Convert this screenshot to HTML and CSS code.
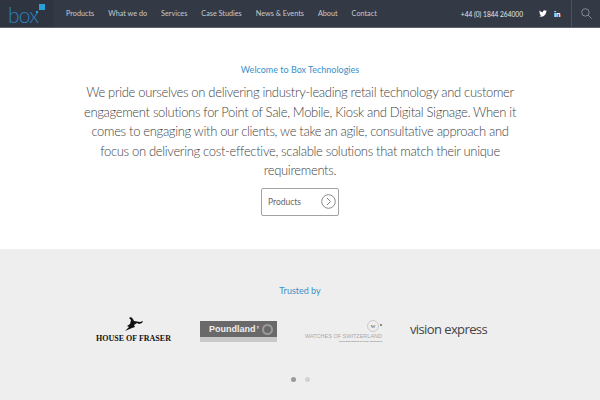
FILE: index.html
```html
<!DOCTYPE html>
<html lang="en">
<head>
<meta charset="utf-8">
<title>Box Technologies</title>
<link rel="stylesheet" href="styles.css">
</head>
<body>
<header class="topbar">
  <a class="logo">
    <span class="logo-word">box</span>
    <svg class="logo-mark" width="14" height="14" viewBox="0 0 14 14"><rect x="6" y="0" width="6" height="6" fill="#2a9fd8"/><rect x="3" y="7" width="2" height="2" fill="#2a9fd8"/></svg>
  </a>
  <nav class="nav">
    <a>Products</a><a>What we do</a><a>Services</a><a>Case Studies</a><a>News &amp; Events</a><a>About</a><a>Contact</a>
  </nav>
  <div class="phone">+44 (0) 1844 264000</div>
  <div class="social">
    <svg width="8" height="7" viewBox="0 0 24 20"><path fill="#fff" d="M24 2.4c-.9.4-1.8.7-2.8.8 1-.6 1.800-1.600 2.200-2.700-1 .6-2 1-3.100 1.200A4.900 4.900 0 0 0 11.900 6.200C7.800 6 4.200 4 1.700.9c-1.300 2.200-.7 5.100 1.500 6.600-.8 0-1.600-.2-2.200-.6 0 2.400 1.700 4.400 3.900 4.900-.7.200-1.500.2-2.200.1.600 2 2.400 3.400 4.600 3.400A9.900 9.900 0 0 1 0 17.300 14 14 0 0 0 21.500 4.900c1-.7 1.900-1.500 2.500-2.500z"/></svg>
    <span class="in">in</span>
  </div>
  <div class="search">
    <svg width="11" height="11" viewBox="0 0 13 13" fill="none" stroke="#8b919a" stroke-width="1.100"><circle cx="5.200" cy="5.200" r="4.400"/><path d="M8.400 8.400l4.200 4.200"/></svg>
  </div>
</header>
<main>
  <section class="intro">
    <h2 class="kicker">Welcome to Box Technologies</h2>
    <p class="lead">We pride ourselves on delivering industry-leading retail technology and customer engagement solutions for Point of Sale, Mobile, Kiosk and Digital Signage. When it comes to engaging with our clients, we take an agile, consultative approach and focus on delivering cost-effective, scalable solutions that match their unique requirements.</p>
    <a class="btn">
      <span>Products</span>
      <svg width="15" height="15" viewBox="0 0 15 15" fill="none" stroke="#8a8a8a" stroke-width="1"><circle cx="7.500" cy="7.500" r="6.800"/><path d="M6 4l3.500 3.500L6 11"/></svg>
    </a>
  </section>
  <section class="trusted">
    <h2 class="kicker">Trusted by</h2>
    <div class="logos">
      <div class="client hof">
        <svg width="21" height="15" viewBox="0 0 21 15"><path fill="#111" d="M8 0l2 2 1 2 6 1 3-1-1 2-3 1-2-1-3 2 1 2-3 1-7 3 4-4-2-1 3-2 1-4-2-2z"/></svg>
        <span>HOUSE OF FRASER</span>
      </div>
      <div class="client pound"><span class="pound-top">Poundland<i>’</i><b></b></span><span class="pound-foot"></span></div>
      <div class="client watches">
        <span class="w-mark">W<i></i></span>
        <span class="w-name">WATCHES OF SWITZERLAND</span>
        <span class="w-sub">specialist retailers of luxury timepieces</span>
      </div>
      <div class="client vision">vision express</div>
    </div>
    <div class="dots"><span class="dot on"></span><span class="dot"></span></div>
  </section>
</main>
</body>
</html>
```
FILE: styles.css
```css
* { box-sizing: border-box; }
html, body { margin: 0; padding: 0; }
body { width: 600px; height: 400px; overflow: hidden; background: #fff; font-family: Lato, sans-serif; }

.topbar { display: flex; align-items: center; height: 28px; background: #333a46; border-bottom: 1px solid #5b6069; color: #c6c9ce; }
.logo { position: relative; flex: none; width: 53px; height: 27px; background: #2e3440; }
.logo-word { position: absolute; left: 8px; top: 2px; font-size: 21px; line-height: 26px; color: #2a80c0; font-family: Lato, sans-serif; font-weight: 300; letter-spacing: -.8px; }
.logo-mark { position: absolute; left: 33px; top: 4px; }
.nav { display: flex; gap: 14px; padding-left: 13px; font-size: 7.250px; flex: none; white-space: nowrap; }
.phone { margin-left: auto; font-size: 6.600px; white-space: nowrap; color: #e4e6e9; }
.social { display: flex; align-items: center; gap: 7px; margin-left: 16px; width: 32px; }
.in { font-size: 8px; font-weight: 900; color: #fff; }
.search { display: flex; align-items: center; justify-content: center; width: 29px; height: 27px; border-left: 1px solid #4b515c; }

.intro { display: flex; flex-direction: column; align-items: center; height: 221px; padding-top: 36px; }
.kicker { margin: 0; font-size: 9px; font-weight: 400; line-height: 12px; color: #3a8fc9; }
.lead { margin: 7px 0 0; width: 444px; font-size: 13px; font-weight: 300; letter-spacing: -.32px; line-height: 19.500px; text-align: center; color: #444; }
.btn { display: flex; align-items: center; justify-content: space-between; width: 78px; height: 28px; margin-top: 7px; padding: 0 2px 0 6px; border: 1px solid #a2a2a2; border-radius: 2px; font-size: 8.500px; color: #666; }

.trusted { display: flex; flex-direction: column; align-items: center; height: 151px; padding-top: 36px; background: #eee; }
.logos { display: flex; align-items: flex-start; gap: 28px; margin: 19px 18px 0 0; height: 27px; }
.client { width: 77px; display: flex; flex-direction: column; align-items: center; }
.hof { padding-top: 1px; color: #111; font-family: "Liberation Serif", serif; font-weight: 700; font-size: 8px; white-space: nowrap; line-height: 9px; }
.hof svg { margin-bottom: 1.500px; }
.pound { margin-top: 5px; }
.pound-top { display: flex; align-items: center; justify-content: flex-start; gap: 1px; width: 100%; height: 16px; padding-left: 9px; background: #696969; color: #eee; font-family: "Liberation Sans", sans-serif; font-weight: 700; font-size: 9px; }
.pound-top i { font-style: normal; }
.pound-top b { width: 11px; height: 11px; margin-left: 2px; border: 2px solid #9a9a9a; border-radius: 50%; }
.pound-foot { width: 100%; height: 5px; background: #c8c8c8; }
.watches { position: relative; padding-top: 4px; color: #a9a9a9; font-family: "Liberation Sans", sans-serif; }
.w-mark { align-self: flex-end; display: flex; align-items: center; justify-content: center; width: 12px; height: 12px; margin-right: 3px; border: 1px solid #ccc; border-radius: 50%; font-size: 5px; color: #444; font-family: "Liberation Serif", serif; }
.w-mark i { position: absolute; right: 0; top: 8px; width: 2px; height: 2px; border-radius: 50%; background: #666; }
.w-name { margin-top: 1px; font-size: 5.500px; line-height: 7px; white-space: nowrap; }
.w-sub { align-self: flex-end; font-size: 2.500px; line-height: 4px; color: #666; white-space: nowrap; }
.vision { margin-top: 6px; font-family: "Open Sans", sans-serif; font-size: 13px; line-height: 14px; letter-spacing: -.6px; color: #444; white-space: nowrap; }
.dots { display: flex; gap: 9px; margin-top: 34px; }
.dot { width: 5px; height: 5px; border-radius: 50%; background: #d2d2d2; }
.dot.on { background: #9a9a9a; }
```
